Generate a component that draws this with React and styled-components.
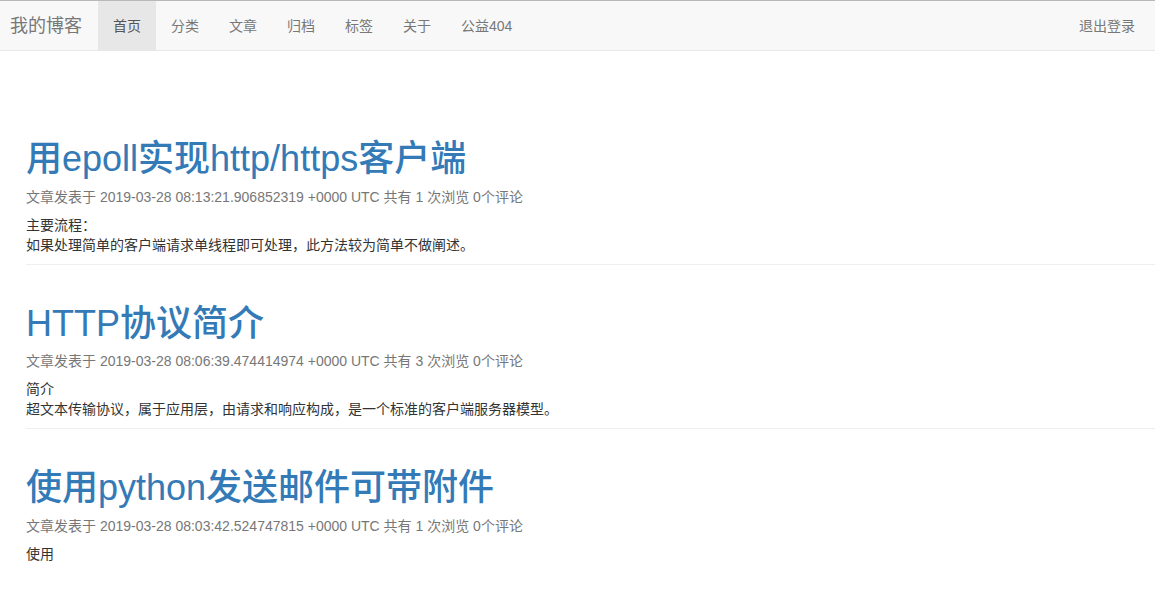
import styled, { createGlobalStyle } from "styled-components";

const GlobalStyle = createGlobalStyle`
  html, body {
    margin: 0;
    padding: 0;
    background: #fff;
  }
  body {
    font-family: "Liberation Sans", "Noto Sans CJK SC", Arial, sans-serif;
    font-size: 14px;
    line-height: 20px;
    color: #333;
  }
`;

const posts = [
  {
    title: "用epoll实现http/https客户端",
    time: "2019-03-28 08:13:21.906852319 +0000 UTC",
    views: 1,
    comments: 0,
    lines: ["主要流程：", "如果处理简单的客户端请求单线程即可处理，此方法较为简单不做阐述。"],
  },
  {
    title: "HTTP协议简介",
    time: "2019-03-28 08:06:39.474414974 +0000 UTC",
    views: 3,
    comments: 0,
    lines: ["简介", "超文本传输协议，属于应用层，由请求和响应构成，是一个标准的客户端服务器模型。"],
  },
  {
    title: "使用python发送邮件可带附件",
    time: "2019-03-28 08:03:42.524747815 +0000 UTC",
    views: 1,
    comments: 0,
    lines: ["使用"],
  },
];

const links = ["首页", "分类", "文章", "归档", "标签", "关于", "公益404"];

const App = () => {
  return (
    <>
      <GlobalStyle />
      <Navbar>
        <Brand href="#">我的博客</Brand>
        <NavList>
          {links.map((l, i) => (
            <NavLink key={l} href="#" $active={i === 0}>
              {l}
            </NavLink>
          ))}
        </NavList>
        <NavRight>
          <NavLink href="#">退出登录</NavLink>
        </NavRight>
      </Navbar>
      <Main>
        {posts.map((p) => (
          <Post key={p.title}>
            <Title>
              <a href="#">{p.title}</a>
            </Title>
            <Meta>
              文章发表于 {p.time} 共有 {p.views} 次浏览 {p.comments}个评论
            </Meta>
            <Excerpt>
              {p.lines.map((line) => (
                <div key={line}>{line}</div>
              ))}
            </Excerpt>
            <Divider />
          </Post>
        ))}
      </Main>
    </>
  );
};

const Navbar = styled.nav`
  display: flex;
  align-items: stretch;
  height: 49px;
  background: #f8f8f8;
  border-top: 1px solid #b8b8b8;
  border-bottom: 1px solid #e7e7e7;
  padding-left: 10px;
  padding-right: 5px;
`;

const Brand = styled.a`
  display: block;
  font-size: 18px;
  line-height: 20px;
  padding: 15px 16px 14px 0;
  color: #777;
  text-decoration: none;
`;

const NavList = styled.div`
  display: flex;
  flex: 1;
`;

const NavRight = styled.div`
  display: flex;
`;

const NavLink = styled.a`
  display: block;
  padding: 15px 15px 14px;
  font-size: 14px;
  line-height: 20px;
  color: ${(p) => (p.$active ? "#555" : "#777")};
  background: ${(p) => (p.$active ? "#e7e7e7" : "transparent")};
  text-decoration: none;
`;

const Main = styled.main`
  padding: 49px 0 0 26px;
`;

const Post = styled.article`
  padding-top: 39px;
`;

const Title = styled.h1`
  margin: 0;
  font-size: 36px;
  line-height: 39.6px;
  font-weight: 500;

  a {
    color: #337ab7;
    text-decoration: none;
  }
`;

const Meta = styled.div`
  margin-top: 8px;
  color: #777;
  font-size: 14px;
  line-height: 20px;
`;

const Excerpt = styled.div`
  margin-top: 8px;
  min-height: 40px;
  color: #333;
  font-size: 14px;
  line-height: 20px;
`;

const Divider = styled.hr`
  margin: 9px 0 0;
  border: 0;
  border-top: 1px solid #eee;
`;

export default App;
